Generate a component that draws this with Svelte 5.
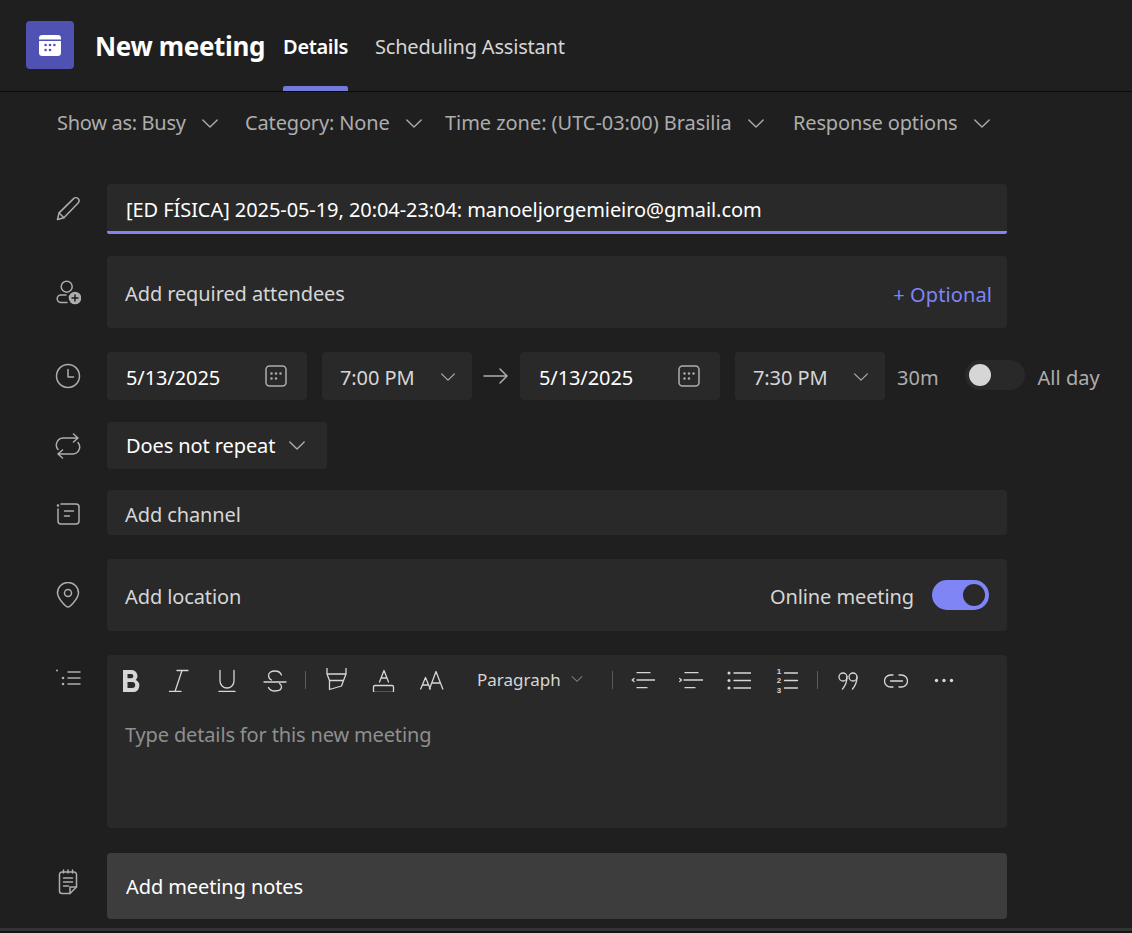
<script>
  const options = [
    { label: "Show as: Busy", width: 188, cls: "tight" },
    { label: "Category: None", width: 200, cls: "" },
    { label: "Time zone: (UTC-03:00) Brasilia", width: 348, cls: "loose" },
    { label: "Response options", width: 200, cls: "" }
  ];
</script>

{#snippet chevron(cls = "chev")}
  <svg class={cls} viewBox="0 0 20 12"><path d="M2 2l8 8 8-8" /></svg>
{/snippet}

{#snippet calendar()}
  <svg class="cal" viewBox="0 0 22 22">
    <rect x="1" y="1" width="20" height="20" rx="3.5" />
    <g class="dots">
      <circle cx="6.5" cy="8.5" r="1.2" /><circle cx="11" cy="8.5" r="1.2" /><circle cx="15.5" cy="8.5" r="1.2" />
      <circle cx="6.5" cy="13.5" r="1.2" /><circle cx="11" cy="13.5" r="1.2" />
    </g>
  </svg>
{/snippet}

<div class="page">
  <header class="header">
    <div class="app-icon">
      <svg viewBox="0 0 20 20" width="22" height="22">
        <path d="M0 4a3 3 0 0 1 3-3h14a3 3 0 0 1 3 3v1H0z" fill="#fff" />
        <path d="M0 6.3h20V17a3 3 0 0 1-3 3H3a3 3 0 0 1-3-3z" fill="#fff" />
        <g fill="#4f52b2">
          <circle cx="6" cy="10" r="1.2" /><circle cx="10" cy="10" r="1.2" /><circle cx="14" cy="10" r="1.2" />
          <circle cx="6" cy="14.5" r="1.2" /><circle cx="10" cy="14.5" r="1.2" />
        </g>
      </svg>
    </div>
    <h1>New meeting</h1>
    <nav class="tabs">
      <span class="tab active">Details</span>
      <span class="tab">Scheduling Assistant</span>
    </nav>
  </header>

  <div class="options">
    {#each options as o}
      <div class="option" style="width: {o.width}px">
        <span class={o.cls}>{o.label}</span>
        {@render chevron()}
      </div>
    {/each}
  </div>

  <div class="form">
    <div class="row subject-row">
      <svg class="ico" viewBox="0 0 26 26">
        <path d="M2.5 23.5l1.6-6.6L18.6 2.6a3 3 0 0 1 4.500 4.300L8.900 21.800z" />
        <path d="M4.100 16.900l4.800 4.900" />
      </svg>
      <div class="field subject"><span>[ED FÍSICA] 2025-05-19, 20:04-23:04: manoeljorgemieiro@gmail.com</span></div>
    </div>

    <div class="row attendees-row">
      <svg class="ico" viewBox="0 0 26 26">
        <circle cx="11.7" cy="7.700" r="5.500" />
        <path d="M11 16H6a3.800 3.800 0 0 0 0 7.600h6" />
        <circle cx="20" cy="19" r="6.300" class="plus-disc" />
        <path d="M20 16v6M17 19h6" class="plus" />
      </svg>
      <div class="field tall">
        <span class="soft">Add required attendees</span>
        <span class="optional">+ Optional</span>
      </div>
    </div>

    <div class="row time-row">
      <svg class="ico" viewBox="0 0 26 26">
        <circle cx="13" cy="13" r="11.500" />
        <path d="M13 6.500V14h5.500" />
      </svg>
      <div class="times">
        <div class="field date"><span>5/13/2025</span>{@render calendar()}</div>
        <div class="field clock"><span>7:00 PM</span>{@render chevron()}</div>
        <svg class="arrow" viewBox="0 0 26 16"><path d="M1 8h23M17 1l7 7-7 7" /></svg>
        <div class="field date"><span>5/13/2025</span>{@render calendar()}</div>
        <div class="field clock"><span>7:30 PM</span>{@render chevron()}</div>
        <span class="duration">30m</span>
        <div class="toggle off"><i></i></div>
        <span class="allday">All day</span>
      </div>
    </div>

    <div class="row repeat-row">
      <svg class="ico" viewBox="0 0 26 26">
        <path d="M3 16.500A7 7 0 0 1 8 5h15M18.500 1l4.500 4-4.500 4" />
        <path d="M23 9.500A7 7 0 0 1 18 21H3M7.500 17L3 21l4.500 4" />
      </svg>
      <div class="field repeat"><span>Does not repeat</span>{@render chevron()}</div>
    </div>

    <div class="row channel-row">
      <svg class="ico channel-ico" viewBox="0 0 26 26">
        <path d="M6 3h15a3 3 0 0 1 3 3v14a3 3 0 0 1-3 3H6a3 3 0 0 1-3-3V8" />
        <path d="M9.500 10h9M9.500 15h5" />
        <circle cx="3" cy="4.500" r="0.600" />
      </svg>
      <div class="field channel"><span class="soft">Add channel</span></div>
    </div>

    <div class="row location-row">
      <svg class="ico" viewBox="0 0 26 26">
        <path d="M13 25c-1 0-3-1.500-5-3.800C5.200 18 2.500 14.500 2.500 11a10.500 10.500 0 0 1 21 0c0 3.500-2.700 7-5.500 10.200-2 2.300-4 3.800-5 3.800z" />
        <circle cx="13" cy="11" r="3.500" />
      </svg>
      <div class="field tall">
        <span class="soft">Add location</span>
        <div class="online">
          <span class="soft">Online meeting</span>
          <div class="toggle on"><i></i></div>
        </div>
      </div>
    </div>

    <div class="row editor-row">
      <svg class="ico list-ico" viewBox="0 0 26 18">
        <g class="solid"><circle cx="2" cy="1.500" r="1" /><circle cx="8" cy="9" r="1.300" /><circle cx="8" cy="15" r="1.300" /></g>
        <path d="M13 3h12M13 9h12M13 15h12" />
      </svg>
      <div class="field editor">
        <div class="toolbar">
          <span class="tool">
            <svg viewBox="0 0 24 24"><path class="bold" d="M4 2h8.500a6 6 0 0 1 4.300 10.100A6.300 6.300 0 0 1 13.500 24H4z M8.500 6v4.300h3.700a2.150 2.150 0 0 0 0-4.300z M8.500 14v6h4.700a3 3 0 0 0 0-6z" /></svg>
          </span>
          <span class="tool">
            <svg viewBox="0 0 24 24"><path d="M10 2.500h11M2.500 23.500H14M15 2.500L8 23.500" /></svg>
          </span>
          <span class="tool">
            <svg viewBox="0 0 24 24"><path d="M5 2.500V13a7 7 0 0 0 14 0V2.500M4 23.500h16" /></svg>
          </span>
          <span class="tool">
            <svg viewBox="0 0 24 24"><path d="M1 14h22M18.500 7C17.500 4.500 15.500 3 12 3 8 3 5.500 4.700 5.500 7.500c0 2 1 3.500 3 4.500M16.500 15.500c1.200.8 2 2 2 3.300 0 2.700-2.500 4.200-6.500 4.200-3.500 0-5.500-1.300-6.500-3.500" /></svg>
          </span>
          <span class="sep"></span>
          <span class="tool">
            <svg viewBox="0 0 24 24"><path d="M3 0.500V6l2.500 6.500h14L22 6V0.500M3 6h19M5.500 12.500v9l12-3.500 2-5.500" /></svg>
          </span>
          <span class="tool">
            <svg viewBox="0 0 24 24"><path d="M7.500 14L12 2.500 16.500 14M9 10h6" /><rect x="1.500" y="17.500" width="20" height="7" rx="1.500" /></svg>
          </span>
          <span class="tool">
            <svg viewBox="0 0 24 24"><path d="M0.700 21L5.500 9.500 10.300 21M2.300 17h6.400M9.500 21L16 3.500 22.800 21M12 15h8.500" /></svg>
          </span>
          <span class="para"><span>Paragraph</span>{@render chevron("chev small")}</span>
          <span class="sep wide"></span>
          <span class="tool">
            <svg viewBox="0 0 24 24"><path d="M6 4.700h13M6 12h18M6 19.700h10M3 10.500L1.200 12 3 13.500" /></svg>
          </span>
          <span class="tool">
            <svg viewBox="0 0 24 24"><path d="M6 4.700h13M5 12h19M6 19.700h10M0.700 10.500L2.500 12 0.700 13.500" /></svg>
          </span>
          <span class="tool">
            <svg viewBox="0 0 24 24"><g class="solid"><circle cx="2" cy="5" r="1.500" /><circle cx="2" cy="12.500" r="1.500" /><circle cx="2" cy="20" r="1.500" /></g><path d="M7 5h17M7 12.500h17M7 20h17" /></svg>
          </span>
          <span class="tool nums">
            <svg viewBox="0 0 24 24"><path d="M9.500 5h13M9.500 12.500h13M9.500 20h13" /></svg>
            <b class="n1">1</b><b class="n2">2</b><b class="n3">3</b>
          </span>
          <span class="sep"></span>
          <span class="tool">
            <svg viewBox="0 0 24 24"><circle cx="7" cy="9" r="4" /><path d="M11 9c0 5-2 9-4.500 12" /><circle cx="17" cy="9" r="4" /><path d="M21 9c0 5-2 9-4.500 12" /></svg>
          </span>
          <span class="tool">
            <svg viewBox="0 0 24 24"><path d="M9 7H6.500a6 6 0 0 0 0 12H9M15 7h2.500a6 6 0 0 1 0 12H15M6.500 13h12" /></svg>
          </span>
          <span class="tool">
            <svg viewBox="0 0 24 24"><g class="solid"><circle cx="4.500" cy="12.500" r="1.700" /><circle cx="12" cy="12.500" r="1.700" /><circle cx="19.500" cy="12.500" r="1.700" /></g></svg>
          </span>
        </div>
        <div class="placeholder">Type details for this new meeting</div>
      </div>
    </div>

    <div class="row notes-row">
      <svg class="ico notes-ico" viewBox="0 0 26 26">
        <path d="M7 3h12a2.500 2.500 0 0 1 2.500 2.500V18L15 24.500H7A2.500 2.500 0 0 1 4.500 22V5.500A2.500 2.500 0 0 1 7 3z" />
        <path d="M8.500 1v3M13 1v3M17.500 1v3M8.500 9h9M8.500 13h9M8.500 17h5M15 24.500V18h6.500" />
      </svg>
      <div class="field notes">Add meeting notes</div>
    </div>
  </div>

  <div class="foot"></div>
</div>

<style>
  :global(body) {
    margin: 0;
    background: #1f1f1f;
  }
  .page {
    width: 1132px;
    height: 933px;
    overflow: hidden;
    background: #1f1f1f;
    color: #d6d6d6;
    font-family: "Noto Sans", "Open Sans", sans-serif;
    font-size: 20px;
    display: flex;
    flex-direction: column;
  }
  svg {
    fill: none;
    stroke: currentColor;
    stroke-width: 1.5;
    stroke-linecap: round;
    stroke-linejoin: round;
    flex: none;
    display: block;
  }
  svg .solid,
  svg .dots {
    fill: currentColor;
    stroke: none;
  }

  .header {
    box-sizing: border-box;
    border-bottom: 1px solid #0a0a0a;
    height: 92px;
    padding-left: 26px;
    display: flex;
    align-items: flex-start;
  }
  .app-icon {
    width: 48px;
    height: 48px;
    margin-top: 21px;
    border-radius: 4px;
    background: #4f52b2;
    display: flex;
    align-items: center;
    justify-content: center;
  }
  .app-icon svg {
    stroke: none;
  }
  h1 {
    margin: 26px 0 0 21px;
    font-size: 26px;
    line-height: 40px;
    font-weight: 700;
    color: #fff;
    letter-spacing: -0.35px;
  }
  .tabs {
    display: flex;
    gap: 27px;
    margin-left: 18px;
    height: 91px;
  }
  .tab {
    position: relative;
    font-size: 20px;
    line-height: 94px;
    height: 91px;
    letter-spacing: -0.2px;
  }
  .tab.active {
    font-weight: 600;
    color: #fff;
    letter-spacing: -0.35px;
  }
  .tab.active::after {
    content: "";
    position: absolute;
    left: 0;
    right: 0;
    bottom: 0;
    height: 5px;
    border-radius: 2px 2px 0 0;
    background: #7479dc;
  }

  .options {
    display: flex;
    align-items: flex-start;
    padding: 16px 0 0 57px;
    height: 92px;
    box-sizing: border-box;
    color: #adadad;
    line-height: 30px;
  }
  .option {
    display: flex;
    align-items: center;
    gap: 15px;
  }
  .option span {
    letter-spacing: -0.15px;
  }
  .option span.tight {
    letter-spacing: -0.3px;
  }
  .option span.loose {
    letter-spacing: -0.05px;
  }
  .chev {
    width: 18px;
    height: 11px;
    color: #adadad;
  }
  .chev.small {
    width: 12px;
    height: 8px;
  }

  .form {
    display: flex;
    flex-direction: column;
    padding-left: 55px;
  }
  .row {
    display: flex;
    align-items: center;
    gap: 26px;
  }
  .ico {
    width: 26px;
    height: 26px;
    color: #adadad;
  }
  .plus-disc {
    fill: #adadad;
    stroke: none;
  }
  .plus {
    stroke: #1f1f1f;
  }
  .field {
    width: 900px;
    box-sizing: border-box;
    background: #292929;
    border-radius: 4px;
    display: flex;
    align-items: center;
    justify-content: space-between;
    padding: 0 18px;
    letter-spacing: -0.1px;
  }
  .soft {
    color: #d6d6d6;
  }

  .subject-row {
    margin-bottom: 22px;
  }
  .subject {
    height: 50px;
    color: #fff;
    border-bottom: 3px solid #7f85f5;
    border-radius: 4px 4px 2px 2px;
    padding-top: 3px;
    padding-left: 19px;
    letter-spacing: -0.07px;
  }
  .tall {
    height: 72px;
    padding-top: 3px;
  }
  .attendees-row {
    margin-bottom: 24px;
  }
  .optional {
    color: #7f85f5;
    margin-right: -3px;
    padding-top: 2px;
    letter-spacing: 0.1px;
  }

  .time-row {
    margin-bottom: 22px;
  }
  .times {
    display: flex;
    align-items: center;
  }
  .date,
  .clock {
    height: 48px;
    color: #fff;
    padding-top: 2px;
  }
  .date {
    width: 200px;
    padding-left: 19px;
    padding-right: 20px;
  }
  .date .cal {
    margin-top: -3px;
  }
  .clock {
    width: 150px;
    margin-left: 15px;
    color: #d6d6d6;
    padding-left: 18px;
    padding-right: 16px;
  }
  .clock .chev {
    width: 16px;
    height: 10px;
  }
  .cal {
    width: 22px;
    height: 22px;
    color: #adadad;
  }
  .arrow {
    width: 26px;
    height: 16px;
    margin: 0 11px;
    color: #adadad;
  }
  .duration,
  .allday {
    margin-left: 12px;
    color: #adadad;
    padding-top: 3px;
  }
  .allday {
    margin-left: 13px;
  }
  .toggle {
    width: 60px;
    height: 30px;
    border-radius: 15px;
    box-sizing: border-box;
    display: flex;
    align-items: center;
    padding: 0 4px;
  }
  .toggle i {
    width: 22px;
    height: 22px;
    border-radius: 50%;
    display: block;
  }
  .toggle.off {
    margin-left: 26px;
    margin-bottom: 2px;
    background: #292929;
  }
  .toggle.off i {
    background: #d6d6d6;
  }
  .toggle.on {
    width: 57px;
    margin-bottom: 3px;
    background: #7f85f5;
    justify-content: flex-end;
  }
  .toggle.on i {
    background: #292929;
  }

  .repeat-row {
    margin-bottom: 21px;
  }
  .repeat {
    width: 220px;
    height: 47px;
    color: #fff;
    padding: 0 21px 0 19px;
  }
  .channel-row {
    margin-bottom: 24px;
  }
  .channel-ico {
    margin-top: 3px;
  }
  .channel {
    height: 45px;
    padding-top: 3px;
  }
  .location-row {
    margin-bottom: 24px;
  }
  .online {
    display: flex;
    align-items: center;
    gap: 18px;
  }

  .editor-row {
    align-items: flex-start;
    margin-bottom: 25px;
  }
  .list-ico {
    height: 18px;
    margin-top: 14px;
  }
  .editor {
    height: 173px;
    display: block;
    padding: 0;
  }
  .toolbar {
    height: 50px;
    display: flex;
    align-items: center;
    padding-left: 12px;
    color: #d6d6d6;
  }
  .tool {
    width: 24px;
    height: 24px;
    margin-right: 24px;
    position: relative;
    display: block;
    flex: none;
  }
  .tool svg {
    width: 24px;
    height: 24px;
    stroke-width: 1.3;
  }
  .tool .bold {
    fill: #d6d6d6;
    fill-rule: evenodd;
    stroke: none;
  }
  .sep {
    width: 1px;
    height: 18px;
    background: #5c5c5c;
    margin: 0 18px 0 -6px;
  }
  .sep.wide {
    margin: 0 18px 0 29px;
  }
  .para {
    display: flex;
    align-items: center;
    gap: 10px;
    font-size: 17px;
    margin-left: 9px;
    margin-top: -2px;
    letter-spacing: 0;
  }
  .nums b {
    position: absolute;
    left: 2px;
    font-family: "Liberation Sans", sans-serif;
    font-size: 8px;
    line-height: 9px;
    font-weight: 700;
    letter-spacing: 0;
    color: #d6d6d6;
  }
  .n1 {
    top: -1px;
  }
  .n2 {
    top: 8.3px;
  }
  .n3 {
    top: 17.6px;
  }
  .placeholder {
    padding: 16px 18px 0;
    color: #8f8f8f;
    letter-spacing: -0.15px;
  }

  .notes-ico {
    margin-bottom: 8px;
  }
  .notes {
    height: 66px;
    background: #3d3d3d;
    color: #fff;
    padding: 0 19px;
  }
  .foot {
    margin-top: 9px;
    height: 3px;
    background: #333;
    border-bottom: 2px solid #141414;
    flex: none;
  }
</style>
